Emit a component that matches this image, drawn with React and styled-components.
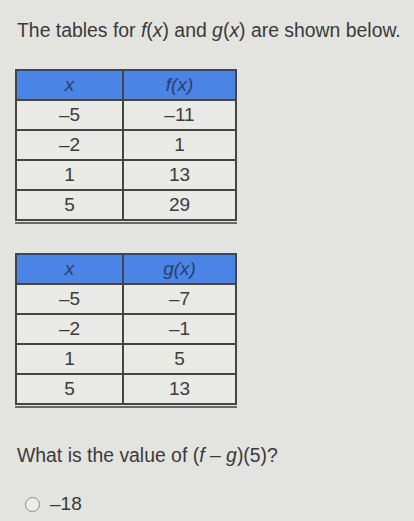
import React from "react";
import styled, { createGlobalStyle } from "styled-components";

const GlobalStyle = createGlobalStyle`
  body {
    margin: 0;
    background: #e3e3e0;
    font-family: "Liberation Sans", Arial, sans-serif;
    color: #3a3a3a;
  }
`;

const Page = styled.div`
  width: 414px;
  height: 521px;
  overflow: hidden;
  padding: 19px 0 0 17px;
  box-sizing: border-box;
`;

const Prompt = styled.p`
  margin: 0;
  margin-top: ${(p) => p.$top || 0}px;
  font-size: 19.4px;
  line-height: 22px;
`;

const Frame = styled.div`
  width: 222px;
  margin-left: -2px;
  margin-top: ${(p) => p.$top}px;
  border-bottom: 2px solid #6a6a6a;
  padding-bottom: 1px;
`;

const Table = styled.table`
  width: 222px;
  border-collapse: collapse;
  table-layout: fixed;
  background: #e9e9e6;
  font-size: 19px;
  line-height: 22px;
`;

const Head = styled.th`
  background: #4a84e6;
  color: #2c3e6a;
  font-weight: normal;
  font-style: italic;
  height: 28px;
  border: 2px solid #454545;
  padding: 0;
`;

const Cell = styled.td`
  text-align: center;
  height: 28px;
  border: 2px solid #454545;
  padding: 0;
  color: #3c3c3c;
`;

const Choice = styled.label`
  display: flex;
  align-items: center;
  gap: 10px;
  margin: 27px 0 0 8px;
  font-size: 19px;
`;

const Radio = styled.span`
  width: 13px;
  height: 13px;
  border: 1.5px solid #8a8a8a;
  border-radius: 50%;
  background: #ececea;
`;

const I = styled.i``;

function FnTable({ name, rows, top }) {
  return (
    <Frame $top={top}>
      <Table>
        <colgroup>
          <col style={{ width: 107 }} />
          <col />
        </colgroup>
        <thead>
          <tr>
            <Head>x</Head>
            <Head>
              {name}(x)
            </Head>
          </tr>
        </thead>
        <tbody>
          {rows.map(([x, y]) => (
            <tr key={x}>
              <Cell>{x}</Cell>
              <Cell>{y}</Cell>
            </tr>
          ))}
        </tbody>
      </Table>
    </Frame>
  );
}

export default function App() {
  return (
    <Page>
      <GlobalStyle />
      <Prompt>
        The tables for <I>f</I>(<I>x</I>) and <I>g</I>(<I>x</I>) are shown below.
      </Prompt>
      <FnTable
        name="f"
        top={28}
        rows={[
          ["–5", "–11"],
          ["–2", "1"],
          ["1", "13"],
          ["5", "29"],
        ]}
      />
      <FnTable
        name="g"
        top={29}
        rows={[
          ["–5", "–7"],
          ["–2", "–1"],
          ["1", "5"],
          ["5", "13"],
        ]}
      />
      <Prompt $top={36}>
        What is the value of (<I>f</I> – <I>g</I>)(5)?
      </Prompt>
      <Choice>
        <Radio />
        –18
      </Choice>
    </Page>
  );
}
